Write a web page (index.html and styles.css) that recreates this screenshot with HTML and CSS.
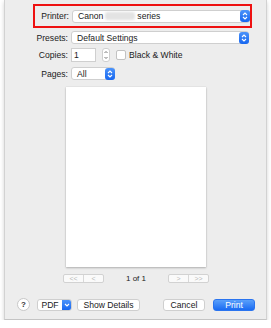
FILE: index.html
```html
<!DOCTYPE html>
<html>
<head>
<meta charset="utf-8">
<link rel="stylesheet" href="styles.css">
</head>
<body>
<div class="win">
  <div class="printer-box">
    <span class="lbl">Printer:</span>
    <div class="popup wide">
      <span class="val">Canon <span class="blur"></span> series</span>
      <span class="arrows"><svg width="6" height="8" viewBox="0 0 6 8"><path d="M1 3 L3 1 L5 3 M1 5 L3 7 L5 5" fill="none" stroke="#fff" stroke-width="1.1"/></svg></span>
    </div>
  </div>
  <div class="row presets">
    <span class="lbl">Presets:</span>
    <div class="popup wide">
      <span class="val">Default Settings</span>
      <span class="arrows"><svg width="6" height="8" viewBox="0 0 6 8"><path d="M1 3 L3 1 L5 3 M1 5 L3 7 L5 5" fill="none" stroke="#fff" stroke-width="1.1"/></svg></span>
    </div>
  </div>
  <div class="row copies">
    <span class="lbl">Copies:</span>
    <div class="field">1</div>
    <div class="stepper"><svg width="6" height="12" viewBox="0 0 6 12"><path d="M1.5 4 L3 2.5 L4.5 4 M1.5 8 L3 9.5 L4.5 8" fill="none" stroke="#555" stroke-width="0.8"/></svg></div>
    <div class="check"></div>
    <span class="bw">Black &amp; White</span>
  </div>
  <div class="row pages">
    <span class="lbl">Pages:</span>
    <div class="popup small">
      <span class="val">All</span>
      <span class="arrows"><svg width="6" height="8" viewBox="0 0 6 8"><path d="M1 3 L3 1 L5 3 M1 5 L3 7 L5 5" fill="none" stroke="#fff" stroke-width="1.1"/></svg></span>
    </div>
  </div>
  <div class="preview-area">
    <div class="paper"></div>
  </div>
  <div class="nav">
    <div class="seg"><span>&lt;&lt;</span><span>&lt;</span></div>
    <span class="pageno">1 of 1</span>
    <div class="seg"><span>&gt;</span><span>&gt;&gt;</span></div>
  </div>
  <div class="bottom">
    <span class="help">?</span>
    <div class="pdf"><span class="pdf-l">PDF</span><span class="pdf-r"><svg width="6" height="4" viewBox="0 0 6 4"><path d="M1 1 L3 3 L5 1" fill="none" stroke="#fff" stroke-width="1.1"/></svg></span></div>
    <button class="btn details">Show Details</button>
    <span class="spacer"></span>
    <button class="btn cancel">Cancel</button>
    <button class="btn print">Print</button>
  </div>
</div>
</body>
</html>
```
FILE: styles.css
```css
html, body {
  margin: 0;
  padding: 0;
  background: #ffffff;
}
body {
  font-family: "Liberation Sans", Arial, sans-serif;
  font-size: 8.6px;
  color: #1a1a1a;
}
.win {
  margin-left: 4px;
  width: 263px;
  height: 320px;
  box-sizing: border-box;
  background: #ededed;
  border-left: 1px solid #d2d2d2;
  border-right: 1px solid #d2d2d2;
  border-bottom: 1px solid #c4c4c4;
  box-shadow: 0 2px 4px rgba(0,0,0,0.18);
  padding-top: 4px;
  display: flex;
  flex-direction: column;
}
.printer-box {
  margin-left: 28px;
  width: 219px;
  height: 24px;
  box-sizing: border-box;
  border: 2px solid #ee1111;
  display: flex;
  align-items: center;
  gap: 3px;
}
.lbl {
  width: 33px;
  text-align: right;
  flex: none;
}
.printer-box .lbl { width: 34px; }
.row {
  display: flex;
  align-items: center;
  margin-left: 30px;
  gap: 3px;
}
.popup {
  height: 11px;
  background: #fff;
  border: 1px solid #cfcfcf;
  border-radius: 3px;
  display: flex;
  align-items: center;
  justify-content: space-between;
  box-sizing: content-box;
  padding-left: 5px;
}
.wide { width: 171px; }
.small { width: 37px; }
.arrows {
  width: 10px;
  height: 12px;
  margin-right: -1px;
  background: linear-gradient(#4b93fa, #1767f0);
  border-radius: 3px;
  display: flex;
  align-items: center;
  justify-content: center;
}
.val { white-space: nowrap; display: flex; align-items: center; }
.blur {
  display: inline-block;
  width: 30px;
  height: 8px;
  margin: 0 2px;
  background: #e3e3e3;
  border-radius: 3px;
  filter: blur(1.2px);
}
.presets { margin-top: 3px; }
.copies { margin-top: 4px; }
.field {
  width: 21px;
  height: 12px;
  background: #fff;
  border: 1px solid #cfcfcf;
  padding-left: 2px;
  line-height: 12px;
}
.stepper {
  width: 6px;
  height: 12px;
  margin-left: 3px;
  background: #fff;
  border: 1px solid #cfcfcf;
  border-radius: 3px;
  display: flex;
}
.check {
  width: 8px;
  height: 8px;
  margin-left: 3px;
  background: #fff;
  border: 1px solid #c2c2c2;
  border-radius: 2px;
}
.pages { margin-top: 5px; }
.preview-area {
  display: flex;
  justify-content: center;
  margin-top: 7px;
}
.paper {
  width: 140px;
  height: 180px;
  margin-left: 1px;
  background: #fff;
  box-shadow: 0 1px 2px rgba(0,0,0,0.25), 0 0 1px rgba(0,0,0,0.15);
}
.nav {
  display: flex;
  align-items: center;
  justify-content: center;
  margin-top: 7px;
  margin-left: 1px;
  height: 9px;
}
.seg {
  display: flex;
  border: 1px solid #d2d2d2;
  border-radius: 2px;
  background: #fafafa;
}
.seg span {
  width: 19px;
  height: 7px;
  font-size: 7px;
  line-height: 7px;
  color: #bbb;
  text-align: center;
}
.seg span + span { border-left: 1px solid #d8d8d8; }
.pageno {
  width: 64px;
  text-align: center;
  font-size: 8px;
}
.bottom {
  display: flex;
  align-items: center;
  margin-top: 15px;
  padding-left: 12px;
  padding-right: 11px;
}
.help {
  width: 11px;
  height: 11px;
  border: 1px solid #c8c8c8;
  border-radius: 50%;
  background: #fff;
  font-size: 8px;
  line-height: 11px;
  text-align: center;
  font-weight: bold;
  color: #333;
}
.pdf {
  margin-left: 7px;
  display: flex;
  height: 10px;
  border: 1px solid #cfcfcf;
  border-radius: 3px;
  background: #fff;
  overflow: hidden;
}
.pdf-l {
  width: 24px;
  text-align: center;
  line-height: 10px;
}
.pdf-r {
  width: 9px;
  background: linear-gradient(#4b93fa, #1767f0);
  display: flex;
  align-items: center;
  justify-content: center;
}
.btn {
  font-family: "Liberation Sans", Arial, sans-serif;
  font-size: 8.6px;
  height: 12px;
  padding: 0;
  border: 1px solid #cfcfcf;
  border-radius: 3px;
  background: #fff;
  color: #1a1a1a;
  line-height: 10px;
  box-sizing: border-box;
}
.details { width: 63px; margin-left: 5px; }
.spacer { flex: 1; }
.cancel { width: 42px; }
.print {
  width: 42px;
  margin-left: 8px;
  background: linear-gradient(#5aa0fb, #1a6bf2);
  border-color: #2a74ef;
  color: #fff;
}
```
